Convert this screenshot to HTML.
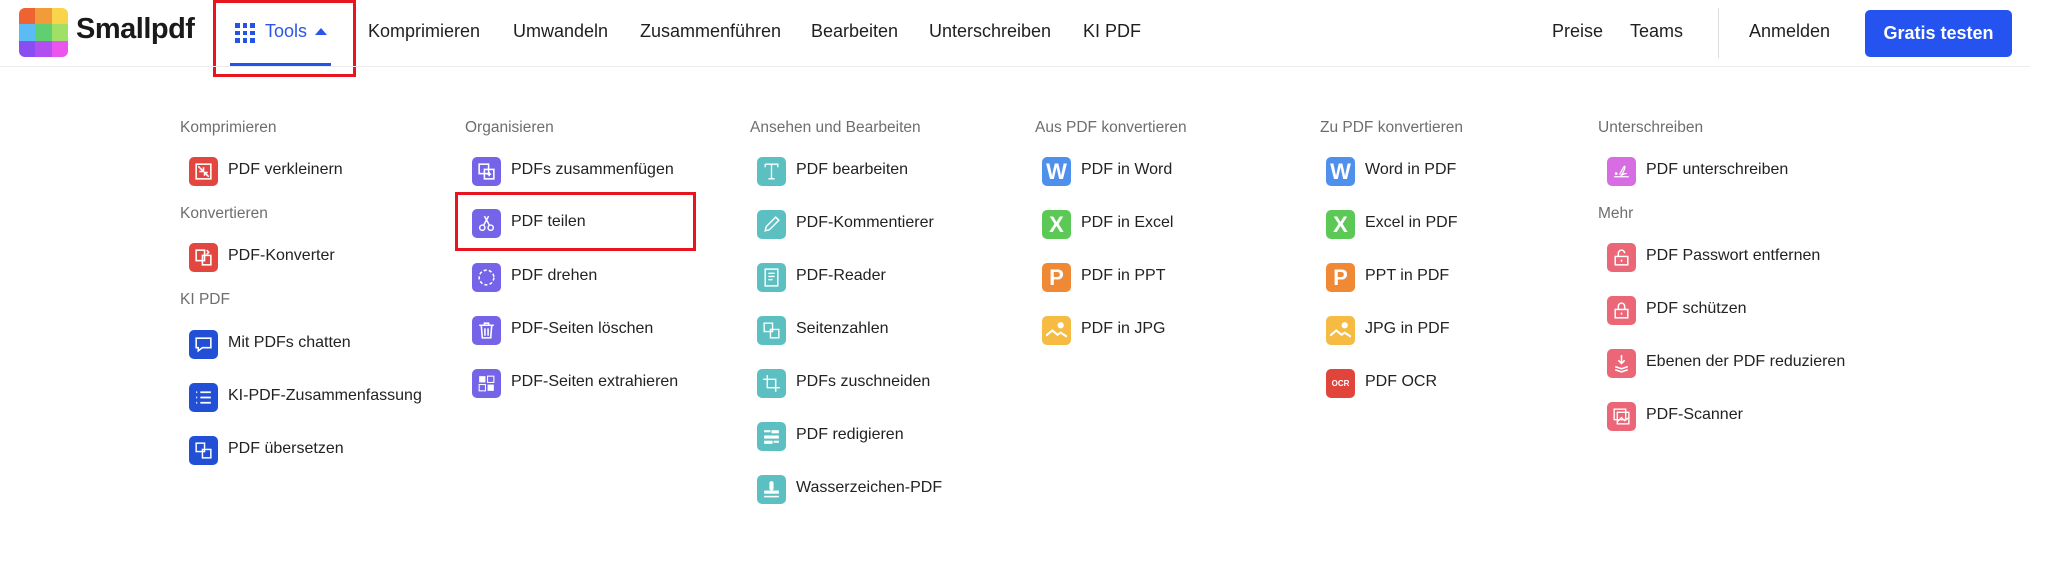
<!DOCTYPE html>
<html><head><meta charset="utf-8"><style>
*{margin:0;padding:0;box-sizing:border-box}
body{width:2048px;height:565px;background:#fff;position:relative;overflow:hidden;font-family:"Liberation Sans",sans-serif;color:#222}
.a{position:absolute;white-space:nowrap}
.nav{font-size:18px;color:#1f1f1f;top:21px}
.h{font-size:15.5px;color:#6e6e6e}
.t{font-size:16px;color:#222}
.ic{position:absolute;width:29px;height:29px;border-radius:5px;display:flex;align-items:center;justify-content:center;color:#fff;font-weight:bold;font-size:20px}
.ic svg{width:21px;height:21px}
</style></head><body>
<div class="a" style="left:19px;top:8px;width:49px;height:49px;border-radius:6px;overflow:hidden;display:grid;grid-template-columns:1fr 1fr 1fr;grid-template-rows:1fr 1fr 1fr">
<div style="background:#ef6232"></div><div style="background:#f29b3b"></div><div style="background:#f9d34a"></div>
<div style="background:#5bbcf5"></div><div style="background:#5fcf72"></div><div style="background:#a0e067"></div>
<div style="background:#8a4df2"></div><div style="background:#b14ff0"></div><div style="background:#e955ee"></div>
</div>
<div class="a" style="left:76px;top:13px;font-size:29px;font-weight:bold;color:#1a1a1a;letter-spacing:-0.5px">Smallpdf</div>
<div class="a" style="left:235px;top:23px;width:20px;height:20px;display:grid;grid-template-columns:repeat(3,1fr);gap:3px">
<i style="background:#2453e8"></i><i style="background:#2453e8"></i><i style="background:#2453e8"></i><i style="background:#2453e8"></i><i style="background:#2453e8"></i><i style="background:#2453e8"></i><i style="background:#2453e8"></i><i style="background:#2453e8"></i><i style="background:#2453e8"></i></div>
<div class="a nav" style="left:265px;color:#2a55e8">Tools</div>
<div class="a" style="left:315px;top:28px;width:0;height:0;border-left:6px solid transparent;border-right:6px solid transparent;border-bottom:7px solid #2a55e8"></div>
<div class="a" style="left:230px;top:63px;width:101px;height:3px;background:#2453e8"></div>
<div class="a" style="left:213px;top:0px;width:143px;height:77px;border:3px solid #e8141f"></div>
<div class="a nav" style="left:368px">Komprimieren</div>
<div class="a nav" style="left:513px">Umwandeln</div>
<div class="a nav" style="left:640px">Zusammenführen</div>
<div class="a nav" style="left:811px">Bearbeiten</div>
<div class="a nav" style="left:929px">Unterschreiben</div>
<div class="a nav" style="left:1083px">KI PDF</div>
<div class="a nav" style="left:1552px">Preise</div>
<div class="a nav" style="left:1630px">Teams</div>
<div class="a" style="left:1718px;top:8px;width:1px;height:50px;background:#ddd"></div>
<div class="a nav" style="left:1749px">Anmelden</div>
<div class="a" style="left:1865px;top:10px;width:147px;height:47px;background:#2453f0;border-radius:5px;color:#fff;font-weight:bold;font-size:18px;display:flex;align-items:center;justify-content:center">Gratis testen</div>
<div class="a" style="left:0;top:66px;width:2030px;height:1px;background:#ececec"></div>

<div class="a h" style="left:180px;top:119px">Komprimieren</div>
<div class="ic" style="left:189px;top:157px;background:#e2463f"><svg viewBox="0 0 20 20" fill="none" stroke="#fff" stroke-width="1.5"><rect x="3" y="3" width="14" height="14"/><path d="M5 5l5 5M10 6v4H6M15 15l-4-4M11 14v-3h3"/></svg></div>
<div class="a t" style="left:228px;top:161px">PDF verkleinern</div>
<div class="a h" style="left:180px;top:205px">Konvertieren</div>
<div class="ic" style="left:189px;top:243px;background:#e2463f"><svg viewBox="0 0 20 20" fill="none" stroke="#fff" stroke-width="1.5"><rect x="3" y="3" width="8" height="10"/><rect x="9" y="8" width="8" height="9"/><path d="M13 3l2 2-2 2"/></svg></div>
<div class="a t" style="left:228px;top:247px">PDF-Konverter</div>
<div class="a h" style="left:180px;top:291px">KI PDF</div>
<div class="ic" style="left:189px;top:330px;background:#2150d6"><svg viewBox="0 0 20 20" fill="none" stroke="#fff" stroke-width="1.5"><path d="M3 4h14v9H9l-4 3v-3H3z"/></svg></div>
<div class="a t" style="left:228px;top:334px">Mit PDFs chatten</div>
<div class="ic" style="left:189px;top:383px;background:#2150d6"><svg viewBox="0 0 20 20" fill="none" stroke="#fff" stroke-width="1.6"><path d="M7 5h10M7 10h10M7 15h10M3 5h1M3 10h1M3 15h1"/></svg></div>
<div class="a t" style="left:228px;top:387px">KI-PDF-Zusammenfassung</div>
<div class="ic" style="left:189px;top:436px;background:#2150d6"><svg viewBox="0 0 20 20" fill="none" stroke="#fff" stroke-width="1.4"><rect x="3" y="3" width="8" height="8"/><rect x="9" y="9" width="8" height="8"/></svg></div>
<div class="a t" style="left:228px;top:440px">PDF übersetzen</div>

<div class="a h" style="left:465px;top:119px">Organisieren</div>
<div class="ic" style="left:472px;top:157px;background:#7563e8"><svg viewBox="0 0 20 20" fill="none" stroke="#fff" stroke-width="1.5"><rect x="3" y="3" width="9" height="9"/><rect x="8" y="8" width="9" height="9"/><path d="M12.5 10.5v4M10.5 12.5h4"/></svg></div>
<div class="a t" style="left:511px;top:161px">PDFs zusammenfügen</div>
<div class="ic" style="left:472px;top:209px;background:#7563e8"><svg viewBox="0 0 20 20" fill="none" stroke="#fff" stroke-width="1.4"><circle cx="6" cy="14" r="2.5"/><circle cx="14" cy="14" r="2.5"/><path d="M7 12L12 3M13 12L8 3"/></svg></div>
<div class="a t" style="left:511px;top:213px">PDF teilen</div>
<div class="a" style="left:455px;top:192px;width:241px;height:59px;border:3px solid #e8141f"></div>
<div class="ic" style="left:472px;top:263px;background:#7563e8"><svg viewBox="0 0 20 20" fill="none" stroke="#fff" stroke-width="1.5" stroke-dasharray="3 2"><circle cx="10" cy="10" r="7"/></svg></div>
<div class="a t" style="left:511px;top:267px">PDF drehen</div>
<div class="ic" style="left:472px;top:316px;background:#7563e8"><svg viewBox="0 0 20 20" fill="none" stroke="#fff" stroke-width="1.5"><path d="M3 5h14M8 5V3h4v2M5 5l1 12h8l1-12M8.5 8v7M11.5 8v7"/></svg></div>
<div class="a t" style="left:511px;top:320px">PDF-Seiten löschen</div>
<div class="ic" style="left:472px;top:369px;background:#7563e8"><svg viewBox="0 0 20 20" fill="#fff"><rect x="3" y="3" width="6" height="6"/><rect x="11" y="3" width="6" height="6" fill="none" stroke="#fff"/><rect x="3" y="11" width="6" height="6" fill="none" stroke="#fff"/><rect x="11" y="11" width="6" height="6"/></svg></div>
<div class="a t" style="left:511px;top:373px">PDF-Seiten extrahieren</div>

<div class="a h" style="left:750px;top:119px">Ansehen und Bearbeiten</div>
<div class="ic" style="left:757px;top:157px;background:#5cbfc1"><svg viewBox="0 0 20 20" fill="none" stroke="#fff" stroke-width="1.3"><path d="M4 3h12v3M4 3v3M10 3v14M7 17h6"/></svg></div>
<div class="a t" style="left:796px;top:161px">PDF bearbeiten</div>
<div class="ic" style="left:757px;top:210px;background:#5cbfc1"><svg viewBox="0 0 20 20" fill="none" stroke="#fff" stroke-width="1.4"><path d="M4 16l1-4 9-9 3 3-9 9z"/></svg></div>
<div class="a t" style="left:796px;top:214px">PDF-Kommentierer</div>
<div class="ic" style="left:757px;top:263px;background:#5cbfc1"><svg viewBox="0 0 20 20" fill="none" stroke="#fff" stroke-width="1.4"><rect x="4" y="2" width="12" height="16"/><path d="M7 6h6M7 9h6M7 12h4"/></svg></div>
<div class="a t" style="left:796px;top:267px">PDF-Reader</div>
<div class="ic" style="left:757px;top:316px;background:#5cbfc1"><svg viewBox="0 0 20 20" fill="none" stroke="#fff" stroke-width="1.3"><rect x="3" y="3" width="8" height="8"/><rect x="9" y="9" width="8" height="8"/></svg></div>
<div class="a t" style="left:796px;top:320px">Seitenzahlen</div>
<div class="ic" style="left:757px;top:369px;background:#5cbfc1"><svg viewBox="0 0 20 20" fill="none" stroke="#fff" stroke-width="1.4"><path d="M6 2v12h12M2 6h12v12"/></svg></div>
<div class="a t" style="left:796px;top:373px">PDFs zuschneiden</div>
<div class="ic" style="left:757px;top:422px;background:#5cbfc1"><svg viewBox="0 0 20 20" fill="#fff"><rect x="3" y="4" width="6" height="2"/><rect x="10" y="4" width="7" height="3"/><rect x="3" y="9" width="14" height="3"/><rect x="3" y="14" width="8" height="3"/><rect x="12" y="14" width="5" height="2"/></svg></div>
<div class="a t" style="left:796px;top:426px">PDF redigieren</div>
<div class="ic" style="left:757px;top:475px;background:#5cbfc1"><svg viewBox="0 0 20 20" fill="#fff"><rect x="8" y="2" width="4" height="9" rx="2"/><rect x="3" y="11" width="14" height="3"/><rect x="3" y="16" width="14" height="1.5"/></svg></div>
<div class="a t" style="left:796px;top:479px">Wasserzeichen-PDF</div>

<div class="a h" style="left:1035px;top:119px">Aus PDF konvertieren</div>
<div class="ic" style="left:1042px;top:157px;background:#4f90ec;font-size:22px">W</div>
<div class="a t" style="left:1081px;top:161px">PDF in Word</div>
<div class="ic" style="left:1042px;top:210px;background:#5cc957;font-size:22px">X</div>
<div class="a t" style="left:1081px;top:214px">PDF in Excel</div>
<div class="ic" style="left:1042px;top:263px;background:#f08935;font-size:22px">P</div>
<div class="a t" style="left:1081px;top:267px">PDF in PPT</div>
<div class="ic" style="left:1042px;top:316px;background:#f5bb42"><svg viewBox="0 0 20 20" fill="none" stroke="#fff" stroke-width="2"><path d="M0 15l6-5 5 4 3-2 6 4"/><circle cx="14" cy="5" r="2" fill="#fff"/></svg></div>
<div class="a t" style="left:1081px;top:320px">PDF in JPG</div>

<div class="a h" style="left:1320px;top:119px">Zu PDF konvertieren</div>
<div class="ic" style="left:1326px;top:157px;background:#4f90ec;font-size:22px">W</div>
<div class="a t" style="left:1365px;top:161px">Word in PDF</div>
<div class="ic" style="left:1326px;top:210px;background:#5cc957;font-size:22px">X</div>
<div class="a t" style="left:1365px;top:214px">Excel in PDF</div>
<div class="ic" style="left:1326px;top:263px;background:#f08935;font-size:22px">P</div>
<div class="a t" style="left:1365px;top:267px">PPT in PDF</div>
<div class="ic" style="left:1326px;top:316px;background:#f5bb42"><svg viewBox="0 0 20 20" fill="none" stroke="#fff" stroke-width="2"><path d="M0 15l6-5 5 4 3-2 6 4"/><circle cx="14" cy="5" r="2" fill="#fff"/></svg></div>
<div class="a t" style="left:1365px;top:320px">JPG in PDF</div>
<div class="ic" style="left:1326px;top:369px;background:#e0443b;font-size:8px">OCR</div>
<div class="a t" style="left:1365px;top:373px">PDF OCR</div>

<div class="a h" style="left:1598px;top:119px">Unterschreiben</div>
<div class="ic" style="left:1607px;top:157px;background:#d86ce3"><svg viewBox="0 0 20 20" fill="none" stroke="#fff" stroke-width="1.2"><path d="M3 15h14M4 11l2 2M6 11l-2 2M8 13c2-3 4-8 5-8s-1 6-3 8 4-2 5-1"/></svg></div>
<div class="a t" style="left:1646px;top:161px">PDF unterschreiben</div>
<div class="a h" style="left:1598px;top:205px">Mehr</div>
<div class="ic" style="left:1607px;top:243px;background:#eb6676"><svg viewBox="0 0 20 20" fill="none" stroke="#fff" stroke-width="1.4"><rect x="4" y="9" width="12" height="8"/><path d="M7 9V6a3 3 0 0 1 6 0"/><path d="M10 12v2"/></svg></div>
<div class="a t" style="left:1646px;top:247px">PDF Passwort entfernen</div>
<div class="ic" style="left:1607px;top:296px;background:#eb6676"><svg viewBox="0 0 20 20" fill="none" stroke="#fff" stroke-width="1.4"><rect x="4" y="9" width="12" height="8"/><path d="M7 9V6a3 3 0 0 1 6 0v3"/><path d="M10 12v2"/></svg></div>
<div class="a t" style="left:1646px;top:300px">PDF schützen</div>
<div class="ic" style="left:1607px;top:349px;background:#eb6676"><svg viewBox="0 0 20 20" fill="none" stroke="#fff" stroke-width="1.5"><path d="M10 2v8M7 7l3 3 3-3M4 13l6 2 6-2M4 16l6 2 6-2"/></svg></div>
<div class="a t" style="left:1646px;top:353px">Ebenen der PDF reduzieren</div>
<div class="ic" style="left:1607px;top:402px;background:#eb6676"><svg viewBox="0 0 20 20" fill="none" stroke="#fff" stroke-width="1.3"><rect x="3" y="3" width="11" height="10"/><rect x="6" y="6" width="11" height="11"/><path d="M6 15l4-4 3 3 4-3"/></svg></div>
<div class="a t" style="left:1646px;top:406px">PDF-Scanner</div>
</body></html>
